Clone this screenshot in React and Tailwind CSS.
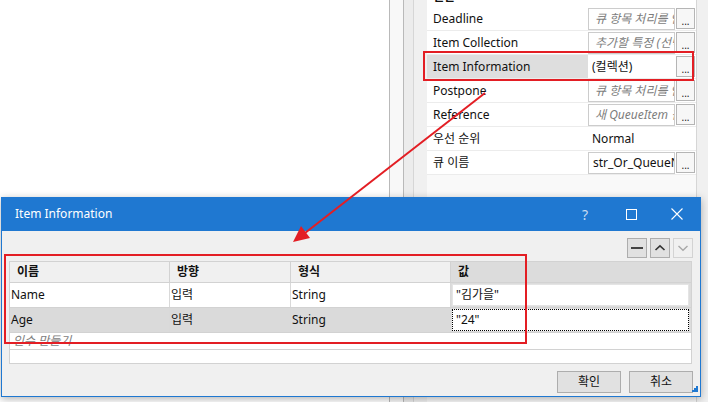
import React from "react";

const props = [
  { name: "Deadline", value: "큐 항목 처리를 연기할 기한", kind: "ph" },
  { name: "Item Collection", value: "추가할 특정 (선택 사항)", kind: "ph" },
  { name: "Item Information", value: "(컬렉션)", kind: "plain", selected: true },
  { name: "Postpone", value: "큐 항목 처리를 연기", kind: "ph" },
  { name: "Reference", value: "새 QueueItem 참조", kind: "ph" },
  { name: "우선 순위", value: "Normal", kind: "plain", noButton: true },
  { name: "큐 이름", value: "str_Or_QueueName", kind: "text" },
];

const args = [
  { name: "Name", dir: "입력", type: "String", value: '"김가을"' },
  { name: "Age", dir: "입력", type: "String", value: '"24"', selected: true },
];

function DotsButton() {
  return (
    <div className="ml-px flex h-[21px] w-[19px] shrink-0 items-end justify-center border border-[#b5b5b5] bg-[#f7f7f7] pb-[2px] text-[10px] leading-none text-[#222]">
      ...
    </div>
  );
}

function PropertyRow({ row }) {
  return (
    <div className="flex h-[24px] items-center border-b border-[#ececec]">
      <div
        className={`flex h-full w-[161px] shrink-0 items-center pl-[6px] ${
          row.selected ? "bg-[#dedede]" : ""
        }`}
      >
        {row.name}
      </div>
      {row.kind === "plain" ? (
        <div className="w-[87px] shrink-0 overflow-hidden whitespace-nowrap pl-[4px]">{row.value}</div>
      ) : (
        <div
          className={`flex h-[22px] w-[87px] shrink-0 items-center overflow-hidden whitespace-nowrap border border-[#cccccc] bg-white ${
            row.kind === "ph" ? "pl-[6px] italic text-[#7d7d7d]" : "pl-[4px]"
          }`}
        >
          {row.value}
        </div>
      )}
      {!row.noButton && <DotsButton />}
    </div>
  );
}

function ToolButton({ disabled, children }) {
  return (
    <div
      className={`flex h-[20px] w-[20px] items-center justify-center border ${
        disabled ? "border-[#d3d3d3] bg-[#f0f0f0]" : "border-[#adadad] bg-[#e1e1e1]"
      }`}
    >
      {children}
    </div>
  );
}

export default function App() {
  return (
    <div className="relative h-[402px] w-[708px] overflow-hidden bg-white font-['Noto_Sans','Noto_Sans_CJK_KR',sans-serif] text-[12px] text-[#111]">
      {/* background: designer + property panel */}
      <div className="flex h-full">
        <div className="w-[389px] bg-white" />
        <div className="w-px bg-[#b9b9b9]" />
        <div className="w-[13px] bg-[#f8f8f8]" />
        <div className="w-px bg-[#b9b9b9]" />
        <div className="w-[9px] bg-[#ececec]" />
        <div className="flex flex-1 border-l border-[#d6d6d6] bg-[#f0f0f0]">
          <div className="w-[13px]" />
          <div className="w-[269px] bg-[#f9f9f9]">
            <div className="h-[7px] overflow-hidden bg-white pl-[6px]">
              <div className="-mt-[12px] font-bold">일반</div>
            </div>
            <div className="bg-white">
              {props.map((row) => (
                <PropertyRow key={row.name} row={row} />
              ))}
            </div>
          </div>
          <div className="w-px bg-[#d6d6d6]" />
          <div className="flex-1 bg-[#f0f0f0]" />
        </div>
      </div>

      {/* dialog window */}
      <div className="absolute left-px top-[197px] flex h-[200px] w-[700px] flex-col border-x border-b border-[#1f78d1] bg-[#f0f0f0] shadow-[0_2px_8px_rgba(0,0,0,0.3)]">
        <div className="flex h-[34px] items-center bg-[#1f78d1] pl-[13px] text-white">
          <span className="flex-1">Item Information</span>
          <span className="w-[12px] text-center text-[14px] text-[#c9dcf2]">?</span>
          <div className="ml-[35px] h-[11px] w-[11px] border border-white" />
          <svg className="ml-[34px] mr-[17px]" width="12" height="12" viewBox="0 0 12 12">
            <path d="M0.5 0.5L11.5 11.5M11.5 0.5L0.5 11.5" stroke="white" strokeWidth="1.1" />
          </svg>
        </div>
        <div className="flex flex-1 flex-col px-[7px] pt-[7px]">
          <div className="flex justify-end gap-[3px]">
            <ToolButton>
              <div className="h-[2px] w-[12px] bg-[#444]" />
            </ToolButton>
            <ToolButton>
              <svg width="12" height="8" viewBox="0 0 12 8">
                <path d="M1.5 6L6 1.8L10.5 6" fill="none" stroke="#333" strokeWidth="1.6" />
              </svg>
            </ToolButton>
            <ToolButton disabled>
              <svg width="12" height="8" viewBox="0 0 12 8">
                <path d="M1.5 2L6 6.2L10.5 2" fill="none" stroke="#a8a8a8" strokeWidth="1.4" />
              </svg>
            </ToolButton>
          </div>

          <div className="mt-[3px] w-[683px] border border-[#d2d2d2] bg-white">
            <div className="flex h-[21px] items-center border-b border-[#d2d2d2] font-bold">
              <div className="flex h-full w-[160px] items-center border-r border-[#d2d2d2] bg-[#f0f0f0] pl-[7px]">이름</div>
              <div className="flex h-full w-[121px] items-center border-r border-[#d2d2d2] bg-[#f0f0f0] pl-[7px]">방향</div>
              <div className="flex h-full w-[160px] items-center border-r border-[#d2d2d2] bg-[#f0f0f0] pl-[7px]">형식</div>
              <div className="flex h-full flex-1 items-center bg-[#dcdcdc] pl-[7px]">값</div>
            </div>
            {args.map((a) => (
              <div
                key={a.name}
                className={`flex h-[25px] items-center border-b border-[#d2d2d2] ${
                  a.selected ? "bg-[#dadada]" : "bg-white"
                }`}
              >
                <div className="flex h-full w-[160px] items-center border-r border-[#d9d9d9] pl-px">{a.name}</div>
                <div className="flex h-full w-[121px] items-center border-r border-[#d9d9d9] pl-px">{a.dir}</div>
                <div className="flex h-full w-[160px] items-center border-r border-[#d9d9d9] pl-px">{a.type}</div>
                <div className="flex h-full flex-1 items-center bg-[#dcdcdc] py-px pl-px pr-[2px]">
                  <div
                    className={`flex h-full w-full items-center bg-white pl-[3px] ${
                      a.selected ? "border border-dotted border-black" : "border border-[#e4e4e4]"
                    }`}
                  >
                    {a.value}
                  </div>
                </div>
              </div>
            ))}
            <div className="flex h-[17px] items-center border-b border-[#d2d2d2] pl-[3px] italic text-[#7d7d7d]">
              인수 만들기
            </div>
            <div className="h-[13px]" />
          </div>

          <div className="mt-[7px] flex justify-end gap-[8px]">
            <div className="flex h-[22px] w-[64px] items-center justify-center border border-[#adadad] bg-[#e1e1e1]">확인</div>
            <div className="flex h-[22px] w-[64px] items-center justify-center border border-[#adadad] bg-[#e1e1e1]">취소</div>
          </div>
        </div>
        <svg className="absolute bottom-[4px] right-[2px]" width="6" height="6" viewBox="0 0 6 6">
          <rect x="4" y="0" width="2" height="2" fill="#1f78d1" />
          <rect x="2" y="2" width="2" height="2" fill="#1f78d1" />
          <rect x="4" y="2" width="2" height="2" fill="#1f78d1" />
          <rect x="0" y="4" width="2" height="2" fill="#1f78d1" />
          <rect x="2" y="4" width="2" height="2" fill="#1f78d1" />
          <rect x="4" y="4" width="2" height="2" fill="#1f78d1" />
        </svg>
      </div>

      {/* annotations */}
      <div className="absolute left-[423px] top-[51px] h-[30px] w-[271px] border-2 border-[#e31e24]" />
      <div className="absolute left-[4px] top-[254px] h-[90px] w-[523px] border-2 border-[#e31e24]" />
      <svg className="pointer-events-none absolute left-0 top-0" width="708" height="402" viewBox="0 0 708 402">
        <line x1="485" y1="93" x2="305" y2="233" stroke="#e31e24" strokeWidth="2" />
        <polygon points="293,242 310,238 301,226" fill="#e31e24" />
      </svg>
    </div>
  );
}
